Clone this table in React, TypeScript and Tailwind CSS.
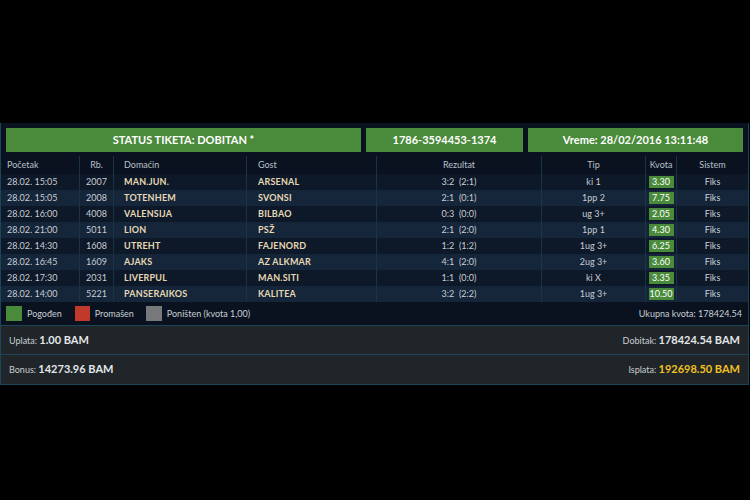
const rows = [
  { t: '28.02. 15:05', rb: '2007', home: 'MAN.JUN.', away: 'ARSENAL', res: '3:2  (2:1)', tip: 'ki 1', k: '3.30' },
  { t: '28.02. 15:05', rb: '2008', home: 'TOTENHEM', away: 'SVONSI', res: '2:1  (0:1)', tip: '1pp 2', k: '7.75' },
  { t: '28.02. 16:00', rb: '4008', home: 'VALENSIJA', away: 'BILBAO', res: '0:3  (0:0)', tip: 'ug 3+', k: '2.05' },
  { t: '28.02. 21:00', rb: '5011', home: 'LION', away: 'PSŽ', res: '2:1  (2:0)', tip: '1pp 1', k: '4.30' },
  { t: '28.02. 14:30', rb: '1608', home: 'UTREHT', away: 'FAJENORD', res: '1:2  (1:2)', tip: '1ug 3+', k: '6.25' },
  { t: '28.02. 16:45', rb: '1609', home: 'AJAKS', away: 'AZ ALKMAR', res: '4:1  (2:0)', tip: '2ug 3+', k: '3.60' },
  { t: '28.02. 17:30', rb: '2031', home: 'LIVERPUL', away: 'MAN.SITI', res: '1:1  (0:0)', tip: 'ki X', k: '3.35' },
  { t: '28.02. 14:00', rb: '5221', home: 'PANSERAIKOS', away: 'KALITEA', res: '3:2  (2:2)', tip: '1ug 3+', k: '10.50' },
];

const grid = 'grid grid-cols-[79px_34px_133px_130px_165px_104px_31px_1fr]';
const cell = 'border-r border-[#1a3446] flex items-center';

export default function App() {
  return (
    <div className="w-[750px] h-[500px] bg-black pt-[123px] text-[#c9ced3]" style={{ fontFamily: 'Lato, "Open Sans", sans-serif' }}>
      <div className="w-[749px] bg-[#0a1220] border-x border-b border-[#1c4658]">
        {/* header boxes */}
        <div className="flex gap-[5px] px-[5px] pt-[5px] pb-[4px]">
          <div className="w-[355px] h-[24px] bg-[#4a8a3b] flex items-center justify-center text-white text-[11px] font-bold">STATUS TIKETA: DOBITAN *</div>
          <div className="w-[157px] h-[24px] bg-[#4a8a3b] flex items-center justify-center text-white text-[11px] font-bold">1786-3594453-1374</div>
          <div className="flex-1 h-[24px] bg-[#4a8a3b] flex items-center justify-center text-white text-[11px] font-bold">Vreme: 28/02/2016 13:11:48</div>
        </div>

        {/* column header */}
        <div className={`${grid} h-[18px] text-[9px] text-[#b8c0c8]`}>
          <div className={`${cell} pl-[6px]`}>Početak</div>
          <div className={`${cell} justify-center`}>Rb.</div>
          <div className={`${cell} pl-[10px]`}>Domaćin</div>
          <div className={`${cell} pl-[11px]`}>Gost</div>
          <div className={`${cell} justify-center`}>Rezultat</div>
          <div className={`${cell} justify-center`}>Tip</div>
          <div className={`${cell} justify-center`}>Kvota</div>
          <div className="flex items-center justify-center">Sistem</div>
        </div>

        {rows.map((r, i) => (
          <div key={i} className={`${grid} h-[16px] text-[9px] ${i % 2 === 0 ? 'bg-[#0d1828]' : 'bg-[#15253a]'}`}>
            <div className={`${cell} pl-[6px]`}>{r.t}</div>
            <div className={`${cell} justify-center`}>{r.rb}</div>
            <div className={`${cell} pl-[10px] font-bold text-[#e6d8b4] tracking-[0.2px]`}>{r.home}</div>
            <div className={`${cell} pl-[11px] font-bold text-[#e6d8b4] tracking-[0.2px]`}>{r.away}</div>
            <div className={`${cell} justify-center whitespace-pre`}>{r.res}</div>
            <div className={`${cell} justify-center`}>{r.tip}</div>
            <div className={`${cell} justify-center`}>
              <span className="w-[25px] h-[12px] bg-[#4a8a3b] text-white flex items-center justify-center text-[9px]">{r.k}</span>
            </div>
            <div className="flex items-center justify-center">Fiks</div>
          </div>
        ))}

        {/* legend */}
        <div className="flex items-center h-[24px] px-[5px] text-[9px] border-b border-[#1c4658]">
          <span className="w-[16px] h-[15px] bg-[#4a8a3b] mr-[5px]" />
          <span className="mr-[13px]">Pogođen</span>
          <span className="w-[15px] h-[15px] bg-[#c0392b] mr-[5px]" />
          <span className="mr-[12px]">Promašen</span>
          <span className="w-[16px] h-[15px] bg-[#77787a] mr-[5px]" />
          <span>Poništen (kvota 1,00)</span>
          <span className="ml-auto mr-[1px]">Ukupna kvota: 178424.54</span>
        </div>

        <div className="flex items-center justify-between h-[29px] px-[8px] bg-[#1f2529] border-b border-[#1c4658]">
          <span className="text-[9px]">Uplata: <span className="text-[11px] font-bold text-[#e4e6e8]">1.00 BAM</span></span>
          <span className="text-[9px]">Dobitak: <span className="text-[11px] font-bold text-[#e4e6e8]">178424.54 BAM</span></span>
        </div>
        <div className="flex items-center justify-between h-[29px] px-[8px] bg-[#1f2529]">
          <span className="text-[9px]">Bonus: <span className="text-[11px] font-bold text-[#e4e6e8]">14273.96 BAM</span></span>
          <span className="text-[9px]">Isplata: <span className="text-[11px] font-bold text-[#f0c020]">192698.50 BAM</span></span>
        </div>
      </div>
    </div>
  );
}
